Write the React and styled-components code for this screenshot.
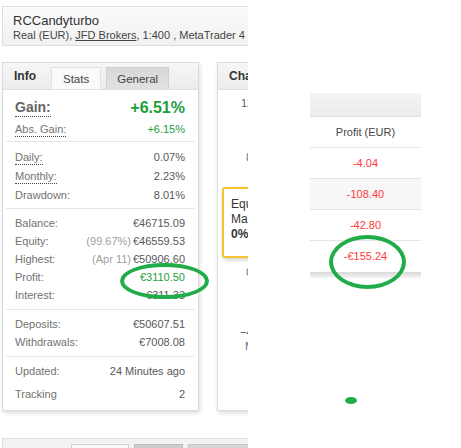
import React from 'react'
import styled, { createGlobalStyle } from 'styled-components'

const GlobalStyle = createGlobalStyle`
  html, body { margin: 0; padding: 0; background: #fff; }
  body { font-family: "Liberation Sans", Arial, sans-serif; }
  * { box-sizing: border-box; }
`

const Page = styled.div`
  position: relative;
  width: 461px;
  height: 448px;
  overflow: hidden;
  display: flex;
  background: #fff;
`

const LeftShot = styled.div`
  width: 248px;
  flex-shrink: 0;
  overflow: hidden;
  padding: 6px 0 0 2px;
`

const Inner = styled.div`
  width: 560px;
`

const AccountBox = styled.div`
  height: 40px;
  border: 1px solid #dedede;
  background: linear-gradient(#fbfbfb, #f1f1f1);
  padding: 6px 0 0 10px;
  color: #333;
`

const AccountName = styled.div`
  font-size: 13px;
  line-height: 15px;
  color: #333;
`

const AccountMeta = styled.div`
  font-size: 11px;
  line-height: 14px;
  color: #444;
  a { color: #444; text-decoration: underline; }
`

const PanelsRow = styled.div`
  display: flex;
  gap: 18px;
  margin-top: 16px;
  align-items: flex-start;
`

const Panel = styled.div`
  width: ${p => p.width}px;
  height: 349px;
  border: 1px solid #dcdcdc;
  background: #fff;
  box-shadow: 1px 2px 4px rgba(0, 0, 0, 0.14);
  position: relative;
  flex-shrink: 0;
`

const PanelHead = styled.div`
  height: 27px;
  background: linear-gradient(#f6f6f6, #ececec);
  border-bottom: 1px solid #e0e0e0;
  display: flex;
  align-items: flex-end;
  padding-left: 11px;
  gap: 5px;
`

const HeadTitle = styled.div`
  font-size: 12px;
  font-weight: bold;
  color: #333;
  align-self: center;
  width: 32px;
`

const Tab = styled.div`
  height: 22px;
  padding: 0 ${p => p.pad}px;
  font-size: 11.5px;
  color: #444;
  display: flex;
  align-items: center;
  border: 1px solid ${p => (p.active ? '#e3e3e3' : '#d0d0d0')};
  border-bottom: none;
  background: ${p => (p.active ? '#fafafa' : 'linear-gradient(#d8d8d8, #e2e2e2)')};
`

const Section = styled.div`
  padding: ${p => p.top || 5}px 10px ${p => p.bottom || 5}px 9px;
  border-bottom: ${p => (p.last ? 'none' : '1px solid #e6e6e6')};
  margin: 0 3px;
`

const Row = styled.div`
  height: ${p => p.h || 18}px;
  display: flex;
  align-items: center;
  justify-content: space-between;
  font-size: ${p => (p.big ? 14 : 11)}px;
  margin-top: ${p => p.mt || 0}px;
`

const Label = styled.span`
  color: ${p => (p.big ? '#666' : '#727272')};
  font-weight: ${p => (p.big ? 'bold' : 'normal')};
  border-bottom: ${p => (p.dotted ? '1px dotted #444' : 'none')};
  padding-bottom: ${p => (p.dotted ? 1 : 0)}px;
  margin-top: ${p => (p.dotted ? 2 : 0)}px;
  line-height: ${p => (p.big ? 15 : 12)}px;
`

const Value = styled.span`
  color: ${p => (p.green ? '#1d9e3a' : '#585858')};
  font-weight: ${p => (p.big ? 'bold' : 'normal')};
  font-size: ${p => (p.big ? 16 : 11)}px;
`

const Muted = styled.span`
  color: #a0a0a0;
  margin-right: 2px;
`

const ChartArea = styled.div`
  position: relative;
  height: 320px;
`

const Tooltip = styled.div`
  position: absolute;
  left: 4px;
  top: 97px;
  width: 120px;
  height: 71px;
  border: 2px solid #f6c12c;
  border-radius: 3px;
  background: #fff;
  box-shadow: 1px 2px 4px rgba(0, 0, 0, 0.18);
  padding: 8px 0 0 7px;
  font-size: 12px;
  line-height: 15px;
  color: #333;
`

const TipStrong = styled.div`
  font-weight: bold;
`

const BottomBar = styled.div`
  margin-top: 27px;
  height: 20px;
  border: 1px solid #dedede;
  background: #f2f2f2;
  display: flex;
  padding: 5px 0 0 68px;
  gap: 5px;
`

const BarTab = styled.div`
  width: ${p => p.w}px;
  height: 20px;
  border: 1px solid ${p => p.border};
  background: ${p => p.bg};
`

const RightShot = styled.div`
  flex: 1;
  padding: 93px 0 0 62px;
`

const Table = styled.div`
  width: 111px;
  font-size: 11px;
  text-align: center;
`

const TableHead = styled.div`
  height: 24px;
  background: linear-gradient(#f4f4f4, #ececec);
  border-bottom: 1px solid #e2e2e2;
`

const Cell = styled.div`
  height: 31px;
  line-height: 30px;
  border-bottom: ${p => (p.last ? 'none' : '1px solid #e4e4e4')};
  background: ${p => (p.shade ? '#f7f7f7' : '#fff')};
  color: ${p => (p.red ? '#ff3a3a' : '#444')};
`

const TableFoot = styled.div`
  height: 6px;
  background: linear-gradient(#d8d8d8, #f4f4f4);
`

const Ring = styled.div`
  position: absolute;
  left: ${p => p.x}px;
  top: ${p => p.y}px;
  width: ${p => p.w}px;
  height: ${p => p.h}px;
  border: ${p => (p.dot ? 'none' : '4px solid #20ad49')};
  background: ${p => (p.dot ? '#20ad49' : 'transparent')};
  border-radius: 50%;
`

const ChartAxis = () => (
  <svg width="300" height="320" style={{ display: 'block' }}>
    <g fontFamily="Liberation Sans, Arial, sans-serif" fontSize="11" fill="#666">
      <text x="23" y="17">120</text>
      <text x="28" y="71">80</text>
      <text x="28" y="186" fill="#4a6fa5">0</text>
      <text x="22" y="246" fill="#555">−40</text>
      <text x="27" y="260" fill="#5570a0">Mar</text>
    </g>
  </svg>
)

export default function App() {
  return (
    <Page>
      <GlobalStyle />
      <LeftShot>
        <Inner>
          <AccountBox>
            <AccountName>RCCandyturbo</AccountName>
            <AccountMeta>
              Real (EUR), <a>JFD Brokers</a>, 1:400 , MetaTrader 4
            </AccountMeta>
          </AccountBox>

          <PanelsRow>
            <Panel width={197}>
              <PanelHead>
                <HeadTitle>Info</HeadTitle>
                <Tab active pad={11}>Stats</Tab>
                <Tab pad={10}>General</Tab>
              </PanelHead>

              <Section top={5} bottom={4}>
                <Row big h={25}>
                  <Label big dotted>Gain:</Label>
                  <Value big green>+6.51%</Value>
                </Row>
                <Row h={17}>
                  <Label dotted>Abs. Gain:</Label>
                  <Value green>+6.15%</Value>
                </Row>
              </Section>

              <Section top={5} bottom={4}>
                <Row h={19}>
                  <Label dotted>Daily:</Label>
                  <Value>0.07%</Value>
                </Row>
                <Row h={19}>
                  <Label dotted>Monthly:</Label>
                  <Value>2.23%</Value>
                </Row>
                <Row h={19}>
                  <Label>Drawdown:</Label>
                  <Value>8.01%</Value>
                </Row>
              </Section>

              <Section top={5} bottom={5}>
                <Row>
                  <Label>Balance:</Label>
                  <Value>€46715.09</Value>
                </Row>
                <Row>
                  <Label>Equity:</Label>
                  <Value><Muted>(99.67%)</Muted>€46559.53</Value>
                </Row>
                <Row>
                  <Label>Highest:</Label>
                  <Value><Muted>(Apr 11)</Muted>€50906.60</Value>
                </Row>
                <Row>
                  <Label>Profit:</Label>
                  <Value green>€3110.50</Value>
                </Row>
                <Row>
                  <Label>Interest:</Label>
                  <Value>€311.33</Value>
                </Row>
              </Section>

              <Section top={5} bottom={5}>
                <Row>
                  <Label>Deposits:</Label>
                  <Value>€50607.51</Value>
                </Row>
                <Row>
                  <Label>Withdrawals:</Label>
                  <Value>€7008.08</Value>
                </Row>
              </Section>

              <Section top={5} bottom={4} last>
                <Row>
                  <Label>Updated:</Label>
                  <Value>24 Minutes ago</Value>
                </Row>
                <Row mt={5}>
                  <Label>Tracking</Label>
                  <Value>2</Value>
                </Row>
              </Section>
            </Panel>

            <Panel width={320}>
              <PanelHead>
                <HeadTitle>Chart</HeadTitle>
              </PanelHead>
              <ChartArea>
                <ChartAxis />
                <Tooltip>
                  <div>Equity Growth</div>
                  <div>March 2</div>
                  <TipStrong>0%</TipStrong>
                </Tooltip>
              </ChartArea>
            </Panel>
          </PanelsRow>

          <BottomBar>
            <BarTab w={58} border="#d0d0d0" bg="#f7f7f7" />
            <BarTab w={49} border="#bdbdbd" bg="#cbcbcb" />
            <BarTab w={70} border="#c8c8c8" bg="#d6d6d6" />
          </BottomBar>
        </Inner>
      </LeftShot>

      <RightShot>
        <Table>
          <TableHead />
          <Cell>Profit (EUR)</Cell>
          <Cell red>-4.04</Cell>
          <Cell red shade>-108.40</Cell>
          <Cell red>-42.80</Cell>
          <Cell red last>-€155.24</Cell>
          <TableFoot />
        </Table>
      </RightShot>

      <Ring x={120} y={263} w={89} h={36} />
      <Ring x={329} y={235} w={77} h={54} />
      <Ring dot x={345} y={397} w={12} h={7} />
    </Page>
  )
}
